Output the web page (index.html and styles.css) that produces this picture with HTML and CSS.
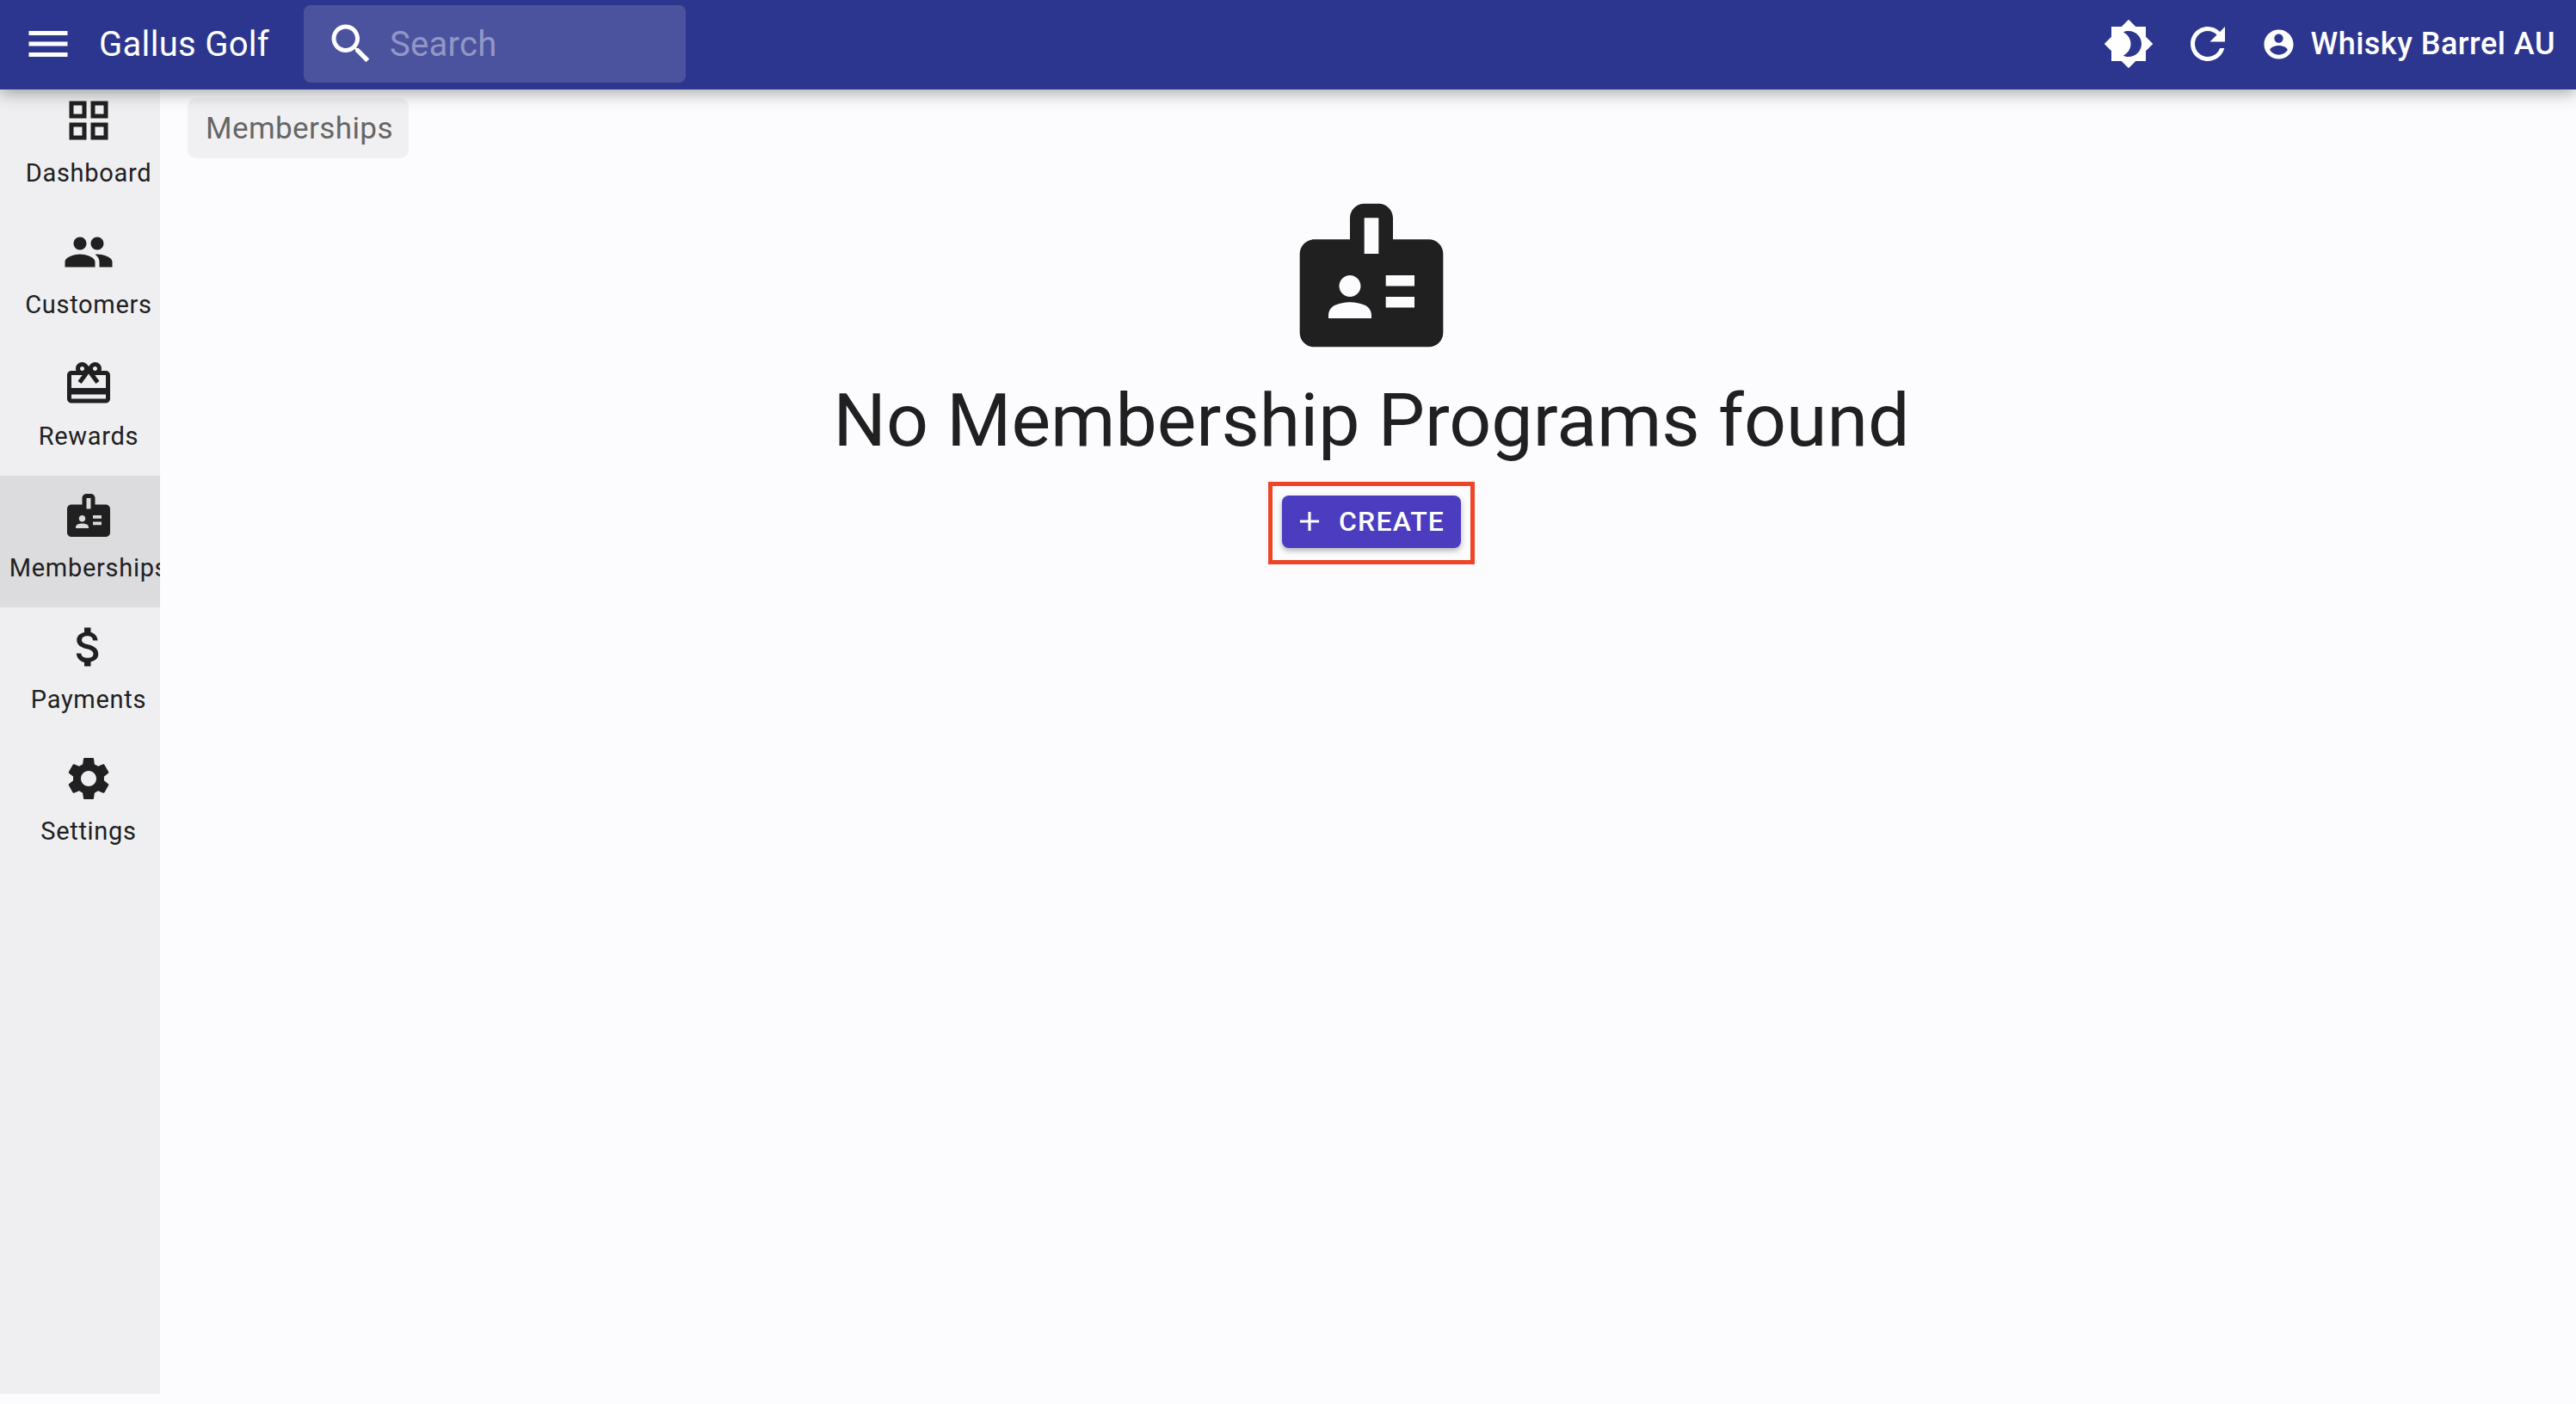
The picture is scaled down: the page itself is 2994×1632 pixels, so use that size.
FILE: index.html
```html
<!DOCTYPE html>
<html lang="en">
<head>
    <meta charset="UTF-8">
    <meta name="viewport" content="width=device-width, initial-scale=1.0">
    <title>Gallus Golf - Memberships</title>
    <link rel="stylesheet" href="styles.css">
</head>
<body>
    <header class="topbar">
        <svg class="icon menu-icon" viewBox="0 0 24 24"><path d="M3 18h18v-2H3v2zm0-5h18v-2H3v2zm0-7v2h18V6H3z"/></svg>
        <div class="brand">Gallus Golf</div>
        <div class="search">
            <svg class="icon" viewBox="0 0 24 24"><path d="M15.5 14h-.79l-.28-.27C15.41 12.59 16 11.11 16 9.5 16 5.91 13.09 3 9.5 3S3 5.91 3 9.5 5.91 16 9.5 16c1.61 0 3.09-.59 4.23-1.57l.27.28v.79l5 4.99L20.49 19l-4.99-5zm-6 0C7.01 14 5 11.99 5 9.5S7.01 5 9.5 5 14 7.01 14 9.5 11.99 14 9.5 14z"/></svg>
            <span class="search-text">Search</span>
        </div>
        <div class="topbar-right">
            <svg class="icon" viewBox="0 0 24 24"><path d="M20 8.69V4h-4.69L12 .69 8.69 4H4v4.69L.69 12 4 15.31V20h4.69L12 23.31 15.31 20H20v-4.69L23.31 12 20 8.69zM12 18c-.89 0-1.74-.2-2.5-.55C11.56 16.5 13 14.42 13 12s-1.44-4.5-3.5-5.45C10.26 6.2 11.11 6 12 6c3.31 0 6 2.69 6 6s-2.69 6-6 6z"/></svg>
            <svg class="icon" viewBox="0 0 24 24"><path d="M17.65 6.35C16.2 4.9 14.21 4 12 4c-4.42 0-7.99 3.58-7.99 8s3.57 8 7.99 8c3.73 0 6.84-2.55 7.73-6h-2.08c-.82 2.33-3.04 4-5.65 4-3.31 0-6-2.69-6-6s2.69-6 6-6c1.66 0 3.14.69 4.22 1.78L13 11h7V4l-2.35 2.35z"/></svg>
            <div class="account">
                <svg class="icon account-icon" viewBox="0 0 24 24"><path d="M12 2C6.48 2 2 6.48 2 12s4.48 10 10 10 10-4.48 10-10S17.52 2 12 2zm0 3c1.66 0 3 1.34 3 3s-1.34 3-3 3-3-1.34-3-3 1.34-3 3-3zm0 14.2c-2.5 0-4.71-1.28-6-3.22.03-1.99 4-3.08 6-3.08 1.99 0 5.97 1.09 6 3.08-1.29 1.94-3.5 3.22-6 3.22z"/></svg>
                <span>Whisky Barrel AU</span>
            </div>
        </div>
    </header>

    <div class="page">
        <nav class="sidebar">
            <div class="nav-list">
                <div class="nav-item">
                    <svg class="icon" viewBox="0 0 24 24"><path d="M3 3v8h8V3H3zm6 6H5V5h4v4zm-6 4v8h8v-8H3zm6 6H5v-4h4v4zm4-16v8h8V3h-8zm6 6h-4V5h4v4zm-6 4v8h8v-8h-8zm6 6h-4v-4h4v4z"/></svg>
                    <div class="nav-label">Dashboard</div>
                </div>
                <div class="nav-item">
                    <svg class="icon" viewBox="0 0 24 24"><path d="M16 11c1.66 0 2.99-1.34 2.99-3S17.66 5 16 5c-1.66 0-3 1.34-3 3s1.34 3 3 3zm-8 0c1.66 0 2.99-1.34 2.99-3S9.66 5 8 5C6.34 5 5 6.34 5 8s1.34 3 3 3zm0 2c-2.33 0-7 1.17-7 3.5V19h14v-2.5c0-2.33-4.67-3.5-7-3.5zm8 0c-.29 0-.62.02-.97.05 1.16.84 1.97 1.97 1.97 3.45V19h6v-2.5c0-2.33-4.67-3.5-7-3.5z"/></svg>
                    <div class="nav-label">Customers</div>
                </div>
                <div class="nav-item">
                    <svg class="icon" viewBox="0 0 24 24"><path d="M20 6h-2.18c.11-.31.18-.65.18-1 0-1.66-1.34-3-3-3-1.05 0-1.96.54-2.5 1.35l-.5.67-.5-.68C10.96 2.54 10.05 2 9 2 7.34 2 6 3.34 6 5c0 .35.07.69.18 1H4c-1.11 0-1.99.89-1.99 2L2 19c0 1.11.89 2 2 2h16c1.11 0 2-.89 2-2V8c0-1.11-.89-2-2-2zm-5-2c.55 0 1 .45 1 1s-.45 1-1 1-1-.45-1-1 .45-1 1-1zM9 4c.55 0 1 .45 1 1s-.45 1-1 1-1-.45-1-1 .45-1 1-1zm11 15H4v-2h16v2zm0-5H4V8h5.08L7 10.83 8.62 12 11 8.76l1-1.36 1 1.36L15.38 12 17 10.83 14.92 8H20v6z"/></svg>
                    <div class="nav-label">Rewards</div>
                </div>
                <div class="nav-item active">
                    <svg class="icon" viewBox="0 0 24 24"><path d="M20 7h-5V4c0-1.1-.9-2-2-2h-2c-1.1 0-2 .9-2 2v3H4c-1.1 0-2 .9-2 2v11c0 1.1.9 2 2 2h16c1.1 0 2-.9 2-2V9c0-1.1-.9-2-2-2zM9 12c.83 0 1.5.67 1.5 1.5S9.83 15 9 15s-1.5-.67-1.5-1.5S8.17 12 9 12zm3 6H6v-.43c0-.6.36-1.15.92-1.39.64-.28 1.34-.43 2.08-.43s1.44.15 2.08.43c.55.24.92.78.92 1.39V18zm1-9h-2V4h2v5zm5 7.5h-4V15h4v1.5zm0-3h-4V12h4v1.5z"/></svg>
                    <div class="nav-label">Memberships</div>
                </div>
                <div class="nav-item">
                    <svg class="icon" viewBox="0 0 24 24"><path d="M11.8 10.9c-2.27-.59-3-1.2-3-2.15 0-1.09 1.01-1.85 2.7-1.85 1.78 0 2.44.85 2.5 2.1h2.21c-.07-1.72-1.12-3.3-3.21-3.81V3h-3v2.16c-1.94.42-3.5 1.68-3.5 3.61 0 2.31 1.91 3.46 4.7 4.13 2.5.6 3 1.48 3 2.41 0 .69-.49 1.79-2.7 1.79-2.06 0-2.87-.92-2.98-2.1h-2.2c.12 2.19 1.76 3.75 3.68 4.16V21h3v-2.15c1.95-.37 3.5-1.5 3.5-3.55 0-2.84-2.43-3.81-4.7-4.4z"/></svg>
                    <div class="nav-label">Payments</div>
                </div>
                <div class="nav-item">
                    <svg class="icon" viewBox="0 0 24 24"><path d="M19.14 12.94c.04-.3.06-.61.06-.94 0-.32-.02-.64-.07-.94l2.03-1.58c.18-.14.23-.41.12-.61l-1.92-3.32c-.12-.22-.37-.29-.59-.22l-2.39.96c-.5-.38-1.03-.7-1.62-.94L14.4 2.81c-.04-.24-.24-.41-.48-.41h-3.84c-.24 0-.43.17-.47.41L9.25 5.35C8.66 5.59 8.12 5.92 7.63 6.29L5.24 5.33c-.22-.08-.47 0-.59.22L2.74 8.87C2.62 9.08 2.66 9.34 2.86 9.48l2.03 1.58C4.84 11.36 4.8 11.69 4.8 12s.02.64.07.94l-2.03 1.58c-.18.14-.23.41-.12.61l1.92 3.32c.12.22.37.29.59.22l2.39-.96c.5.38 1.03.7 1.62.94l.36 2.54c.05.24.24.41.48.41h3.84c.24 0 .44-.17.47-.41l.36-2.54c.59-.24 1.13-.56 1.62-.94l2.39.96c.22.08.47 0 .59-.22l1.92-3.32c.12-.22.07-.47-.12-.61l-2.01-1.58zM12 15.6c-1.98 0-3.6-1.62-3.6-3.6s1.62-3.6 3.6-3.6 3.6 1.62 3.6 3.6-1.62 3.6-3.6 3.6z"/></svg>
                    <div class="nav-label">Settings</div>
                </div>
            </div>
        </nav>

        <main class="content">
            <div class="breadcrumb">Memberships</div>
            <div class="empty-state">
                <svg class="empty-icon" viewBox="0 0 24 24"><path d="M20 7h-5V4c0-1.1-.9-2-2-2h-2c-1.1 0-2 .9-2 2v3H4c-1.1 0-2 .9-2 2v11c0 1.1.9 2 2 2h16c1.1 0 2-.9 2-2V9c0-1.1-.9-2-2-2zM9 12c.83 0 1.5.67 1.5 1.5S9.83 15 9 15s-1.5-.67-1.5-1.5S8.17 12 9 12zm3 6H6v-.43c0-.6.36-1.15.92-1.39.64-.28 1.34-.43 2.08-.43s1.44.15 2.08.43c.55.24.92.78.92 1.39V18zm1-9h-2V4h2v5zm5 7.5h-4V15h4v1.5zm0-3h-4V12h4v1.5z"/></svg>
                <h1 class="empty-title">No Membership Programs found</h1>
                <div class="highlight">
                    <button class="create-btn" type="button">
                        <svg class="add-icon" viewBox="0 0 24 24"><path d="M19 13h-6v6h-2v-6H5v-2h6V5h2v6h6v2z"/></svg>
                        CREATE
                    </button>
                </div>
            </div>
        </main>
    </div>
</body>
</html>
```

FILE: styles.css
```css
* {
    box-sizing: border-box;
}

html, body {
    height: 100%;
}

body {
    margin: 0;
    overflow: hidden;
    font-family: 'Roboto', sans-serif;
    background: #fcfcff;
    color: #202020;
}

.icon {
    display: block;
    width: 60px;
    height: 60px;
    flex-shrink: 0;
    fill: currentColor;
}

/* top bar */
.topbar {
    position: relative;
    z-index: 2;
    display: flex;
    align-items: center;
    height: 104px;
    padding: 0 24px 2px 26px;
    background: #2c368e;
    color: #fff;
    box-shadow: 0 4px 18px rgba(0, 0, 0, 0.35);
}

.brand {
    margin-left: 29px;
    width: 238px;
    font-size: 40px;
    letter-spacing: 0.3px;
}

.search {
    display: flex;
    align-items: center;
    gap: 15px;
    width: 444px;
    height: 90px;
    padding-left: 25px;
    background: #4c539e;
    border-radius: 8px;
}

.search-text {
    font-size: 40px;
    letter-spacing: 0.3px;
    color: #9297c6;
}

.topbar-right {
    display: flex;
    align-items: center;
    gap: 32px;
    margin-left: auto;
}

.account {
    display: flex;
    align-items: center;
    gap: 16px;
    font-size: 36px;
    font-weight: 500;
    letter-spacing: 0.5px;
}

.account-icon {
    width: 41px;
    height: 41px;
}

/* sidebar */
.page {
    display: flex;
    align-items: flex-start;
}

.sidebar {
    width: 186px;
    height: 1526px;
    margin-top: -10px;
    flex-shrink: 0;
    overflow: hidden;
    background: #efeff1;
}

.nav-list {
    width: 206px;
}

.nav-item {
    display: flex;
    flex-direction: column;
    align-items: center;
    height: 153px;
    padding-top: 16px;
}

.nav-item.active {
    background: #dcdcde;
}

.nav-label {
    margin-top: 14px;
    font-size: 29px;
    line-height: 34px;
    letter-spacing: 0.7px;
    white-space: nowrap;
}

/* main area */
.content {
    flex-grow: 1;
    padding: 10px 0 0 32px;
}

.breadcrumb {
    display: inline-flex;
    align-items: center;
    width: 257px;
    height: 70px;
    padding: 0 0 0 21px;
    background: #f0f0f2;
    border-radius: 10px;
    font-size: 35px;
    letter-spacing: 0.4px;
    color: #666;
}

.empty-state {
    display: flex;
    flex-direction: column;
    align-items: center;
    margin-top: 36px;
    padding-left: 8px;
    padding-right: 32px;
}

.empty-icon {
    display: block;
    width: 200px;
    height: 200px;
    fill: #202020;
}

.empty-title {
    margin: 14px 0 0;
    font-size: 86px;
    font-weight: 400;
    line-height: 110px;
}

.highlight {
    margin-top: 16px;
    padding: 11px 11px 14px;
    border: 5px solid #ee4527;
}

.create-btn {
    display: flex;
    align-items: center;
    gap: 15px;
    width: 208px;
    height: 61px;
    padding: 0 0 2px 13px;
    border: none;
    border-radius: 8px;
    background: #4b3cc0;
    color: #fff;
    font-family: inherit;
    font-size: 32px;
    font-weight: 500;
    letter-spacing: 1.2px;
    box-shadow: 0 3px 6px rgba(0, 0, 0, 0.3);
}

.add-icon {
    width: 38px;
    height: 38px;
    fill: currentColor;
}
```
